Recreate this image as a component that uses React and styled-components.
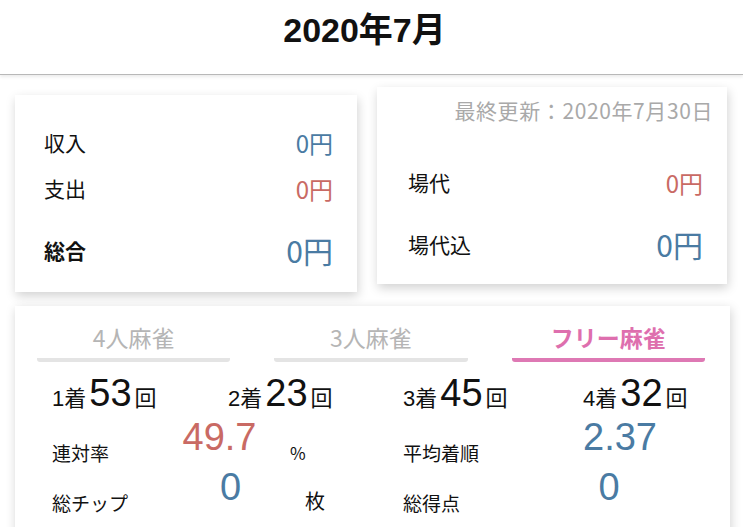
import React from "react";
import styled, { createGlobalStyle } from "styled-components";

const GlobalStyle = createGlobalStyle`
  html, body {
    margin: 0;
    padding: 0;
    background: #ffffff;
    font-family: "Noto Sans CJK JP", "Liberation Sans", sans-serif;
    color: #111;
  }
`;

const places = [
  { rank: 1, count: 53 },
  { rank: 2, count: 23 },
  { rank: 3, count: 45 },
  { rank: 4, count: 32 },
];

export default function App() {
  return (
    <>
      <GlobalStyle />
      <StPage>
        <StHeader>
          <StTitle>2020年7月</StTitle>
        </StHeader>

        <StTopCards>
          <StCard>
            <StMoneyRow>
              <span>収入</span>
              <StMoney $color="#4a7ba3">0円</StMoney>
            </StMoneyRow>
            <StMoneyRow>
              <span>支出</span>
              <StMoney $color="#c96a64">0円</StMoney>
            </StMoneyRow>
            <StMoneyRow $total>
              <strong>総合</strong>
              <StMoney $color="#4a7ba3" $big>0円</StMoney>
            </StMoneyRow>
          </StCard>

          <StCard $right>
            <StUpdated>最終更新：2020年7月30日</StUpdated>
            <StMoneyRow>
              <span>場代</span>
              <StMoney $color="#c96a64">0円</StMoney>
            </StMoneyRow>
            <StMoneyRow $total>
              <span>場代込</span>
              <StMoney $color="#4a7ba3" $big>0円</StMoney>
            </StMoneyRow>
          </StCard>
        </StTopCards>

        <StStatsCard>
          <StTabs>
            <StTab>4人麻雀</StTab>
            <StTab>3人麻雀</StTab>
            <StTab $active>フリー麻雀</StTab>
          </StTabs>

          <StPlaces>
            {places.map((p) => (
              <StPlace key={p.rank}>
                <StPlaceLabel>{p.rank}着</StPlaceLabel>
                <StPlaceCount>{p.count}</StPlaceCount>
                <StPlaceLabel>回</StPlaceLabel>
              </StPlace>
            ))}
          </StPlaces>

          <StStatRow>
            <StStatLabel>連対率</StStatLabel>
            <StStatValue $color="#c96a64">49.7</StStatValue>
            <StStatUnit>%</StStatUnit>
            <StStatLabel>平均着順</StStatLabel>
            <StStatValue $color="#4a7ba3">2.37</StStatValue>
          </StStatRow>
          <StStatRow>
            <StStatLabel>総チップ</StStatLabel>
            <StStatValue $color="#4a7ba3" $indent="22px">0</StStatValue>
            <StStatUnit $shift>枚</StStatUnit>
            <StStatLabel>総得点</StStatLabel>
            <StStatValue $color="#4a7ba3" $indent="0" $outdent="18px">0</StStatValue>
          </StStatRow>
        </StStatsCard>
      </StPage>
    </>
  );
}

const StPage = styled.div`
  width: 743px;
  height: 527px;
  overflow: hidden;
  background: #fff;
`;

const StHeader = styled.header`
  height: 74px;
  display: flex;
  justify-content: center;
  align-items: flex-start;
  border-bottom: 1px solid #b8b8b8;
  box-shadow: 0 2px 3px rgba(0, 0, 0, 0.08);
`;

const StTitle = styled.h1`
  margin: 3px 0 0 -14px;
  font-family: "Liberation Sans", "Noto Sans CJK JP", sans-serif;
  font-size: 34px;
  font-weight: 700;
`;

const StTopCards = styled.div`
  display: grid;
  grid-template-columns: 342px 350px;
  gap: 20px;
  padding: 16px 0 0 15px;
`;

const StCard = styled.section`
  height: 197px;
  margin-top: ${(p) => (p.$right ? "-4px" : "4px")};
  box-sizing: border-box;
  padding: ${(p) => (p.$right ? "6px 24px 0 31px" : "24px 24px 0 29px")};
  background: #fff;
  box-shadow: 1px 4px 10px rgba(0, 0, 0, 0.18);
  display: flex;
  flex-direction: column;
`;

const StUpdated = styled.div`
  align-self: flex-end;
  margin: 2px -10px 34px 0;
  color: #a9a9a9;
  font-size: 21px;
  letter-spacing: 0.6px;
`;

const StMoneyRow = styled.div`
  display: flex;
  justify-content: space-between;
  align-items: center;
  height: 46px;
  margin-top: ${(p) => (p.$total ? "16px" : "0")};
  font-size: 21px;
  color: #111;
  strong {
    font-weight: 700;
  }
`;

const StMoney = styled.span`
  color: ${(p) => p.$color};
  font-size: ${(p) => (p.$big ? "30px" : "24px")};
`;

const StStatsCard = styled.section`
  margin: 14px 13px 0 15px;
  height: 240px;
  box-sizing: border-box;
  padding: 14px 25px 0 22px;
  background: #fff;
  box-shadow: 1px 3px 10px rgba(0, 0, 0, 0.18);
`;

const StTabs = styled.div`
  display: grid;
  grid-template-columns: repeat(3, 1fr);
  gap: 44px;
`;

const StTab = styled.div`
  text-align: center;
  font-size: 23px;
  font-weight: ${(p) => (p.$active ? 700 : 400)};
  color: ${(p) => (p.$active ? "#de6fae" : "#b5b5b5")};
  padding-bottom: 4px;
  border-bottom: 4px solid ${(p) => (p.$active ? "#de79b4" : "#e4e4e4")};
  border-radius: 0 0 3px 3px;
`;

const StPlaces = styled.div`
  display: grid;
  grid-template-columns: 176px 175px 180px 1fr;
  padding: 10px 0 0 15px;
  height: 44px;
`;

const StPlace = styled.div`
  display: flex;
  align-items: baseline;
  gap: 3px;
  font-family: "Liberation Sans", "Noto Sans CJK JP", sans-serif;
`;

const StPlaceLabel = styled.span`
  font-size: 22px;
  color: #111;
`;

const StPlaceCount = styled.span`
  font-size: 38px;
  color: #111;
`;

const StStatRow = styled.div`
  display: grid;
  grid-template-columns: 120px 95px 136px 180px 70px;
  align-items: end;
  padding-left: 15px;
  height: 50px;
`;

const StStatLabel = styled.span`
  font-size: 19px;
  color: #111;
  padding-bottom: 2px;
`;

const StStatValue = styled.span`
  font-family: "Liberation Sans", sans-serif;
  font-size: 38px;
  color: ${(p) => p.$color};
  text-align: center;
  padding: 0 ${(p) => p.$outdent || "0"} 9px ${(p) => p.$indent || "0"};
`;

const StStatUnit = styled.span`
  font-size: ${(p) => (p.$shift ? "20px" : "17px")};
  color: #111;
  padding: 0 0 3px ${(p) => (p.$shift ? "38px" : "23px")};
`;
